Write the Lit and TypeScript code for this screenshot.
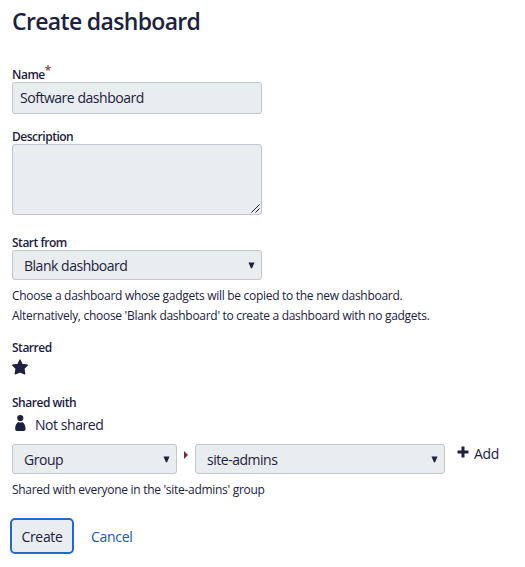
import { LitElement, html, css } from "lit";
import { customElement, property } from "lit/decorators.js";

@customElement("select-box")
class SelectBox extends LitElement {
  @property() value = "";

  static styles = css`
    :host {
      display: flex;
      align-items: center;
      justify-content: space-between;
      box-sizing: border-box;
      height: 30px;
      padding: 2px 6px 0 11px;
      border: 1px solid #c3c5cf;
      border-radius: 3px;
      background: #e9edf0;
      color: #1c2142;
      letter-spacing: -0.48px;
    }
    .arrow {
      display: block;
      width: 7px;
      height: 7px;
      margin-top: -2px;
    }
  `;

  render() {
    return html`<span>${this.value}</span>
      <svg class="arrow" viewBox="0 0 7 7" fill="currentColor">
        <path d="M0.5 0.5H6.5L4.1 6.3H2.9Z" />
      </svg>`;
  }
}

@customElement("app-root")
class AppRoot extends LitElement {
  static styles = css`
    :host {
      display: block;
      box-sizing: border-box;
      height: 567px;
      padding: 7px 12px 0;
      background: #fff;
      color: #1c2142;
      font: 14px/20px "Open Sans", "Noto Sans", sans-serif;
      letter-spacing: -0.3px;
    }
    h1 {
      margin: 0 0 31px;
      font-size: 23px;
      line-height: 28px;
      font-weight: 600;
      letter-spacing: -0.66px;
    }
    .label {
      display: block;
      height: 16px;
      font-size: 12px;
      line-height: 18px;
      font-weight: 600;
      letter-spacing: -0.48px;
    }
    .required {
      display: inline-block;
      height: 16px;
      vertical-align: top;
      margin-top: -4px;
      color: #943c2c;
    }
    .box {
      box-sizing: border-box;
      display: block;
      width: 250px;
      margin: 0;
      border: 1px solid #c3c5cf;
      border-radius: 3px;
      background: #e9edf0;
      letter-spacing: -0.47px;
    }
    .input {
      height: 32px;
      padding: 5px 7px;
      margin-bottom: 14px;
    }
    .area {
      display: flex;
      align-items: flex-end;
      justify-content: flex-end;
      height: 71px;
      padding: 0 1px 1px 0;
      margin-bottom: 19px;
    }
    .grip {
      display: block;
      width: 9px;
      height: 9px;
    }
    .wide {
      width: 250px;
    }
    .narrow {
      width: 165px;
    }
    .help {
      margin: 6px 0 0;
      font-size: 12px;
      line-height: 20px;
      letter-spacing: -0.29px;
    }
    .starred {
      margin-top: 13px;
    }
    .star {
      display: block;
      width: 16px;
      height: 16px;
      margin: 4px 0 19px;
    }
    .status {
      display: flex;
      margin: 5px 0 9px;
      padding-left: 3px;
      letter-spacing: -0.45px;
    }
    .person {
      width: 11px;
      height: 17px;
      margin-right: 9px;
    }
    .share {
      display: flex;
    }
    .next {
      width: 4px;
      height: 8px;
      margin: 7px 7px 0;
    }
    .add {
      display: flex;
      margin-left: 12px;
    }
    .plus {
      width: 12px;
      height: 12px;
      margin: 2px 5px 0 0;
    }
    .actions {
      display: flex;
      align-items: center;
      margin: 18px 0 0 -2px;
    }
    .create {
      box-sizing: border-box;
      width: 64px;
      height: 36px;
      padding: 1px 0 0;
      border: 2px solid #2468c8;
      border-radius: 5px;
      background: #e9edf0;
      color: inherit;
      font: inherit;
      letter-spacing: inherit;
    }
    .cancel {
      margin-left: 17px;
      padding-top: 1px;
      color: #1558bc;
      text-decoration: none;
    }
  `;

  render() {
    return html`
      <h1><span>Create dashboard</span></h1>
      <label class="label"><span>Name</span><span class="required">*</span></label>
      <div class="box input"><span>Software dashboard</span></div>
      <label class="label"><span>Description</span></label>
      <div class="box area">
        <svg class="grip" viewBox="0 0 9 9" stroke="#1c2142" fill="none">
          <path d="M0.5 8.5L8.5 0.5M4.5 8.5L8.5 4.5" />
        </svg>
      </div>
      <label class="label"><span>Start from</span></label>
      <select-box class="wide" value="Blank dashboard"></select-box>
      <p class="help">
        <span>Choose a dashboard whose gadgets will be copied to the new dashboard.</span><br />
        <span>Alternatively, choose 'Blank dashboard' to create a dashboard with no gadgets.</span>
      </p>
      <span class="label starred"><span>Starred</span></span>
      <svg class="star" viewBox="0 0 16 16" fill="currentColor">
        <path
          d="M8 0.9L10 5.3L15.4 6.1L11.9 9.7L12.8 14.9L8 13L3.2 14.9L4.1 9.7L0.6 6.1L6 5.3Z"
          stroke="currentColor"
          stroke-width="1.2"
          stroke-linejoin="round"
        />
      </svg>
      <span class="label"><span>Shared with</span></span>
      <div class="status">
        <svg class="person" viewBox="0 0 11 17" fill="currentColor">
          <circle cx="5.3" cy="3.1" r="3.1" />
          <path
            d="M3.3 7C4.6 7.7 6 7.7 7.3 7C9.1 8.2 10.5 10.6 10.5 13V14.3Q10.5 16 9 16H1.7Q0.2 16 0.2 14.3V13C0.2 10.6 1.5 8.2 3.3 7Z"
          />
        </svg>
        <span>Not shared</span>
      </div>
      <div class="share">
        <select-box class="narrow" value="Group"></select-box>
        <svg class="next" viewBox="0 0 4 8" fill="#6b3038"><path d="M0 0L4 4L0 8Z" /></svg>
        <select-box class="wide" value="site-admins"></select-box>
        <div class="add">
          <svg class="plus" viewBox="0 0 12 12" stroke="currentColor" stroke-width="3">
            <path d="M6 0.5V11.5M0.5 6H11.5" />
          </svg>
          <span>Add</span>
        </div>
      </div>
      <p class="help"><span>Shared with everyone in the 'site-admins' group</span></p>
      <div class="actions">
        <button class="create"><span>Create</span></button>
        <a class="cancel"><span>Cancel</span></a>
      </div>
    `;
  }
}
